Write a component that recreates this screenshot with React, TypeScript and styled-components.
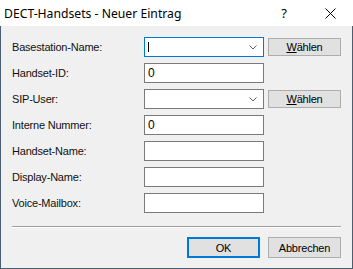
import React from "react";
import styled, { createGlobalStyle } from "styled-components";

const Global = createGlobalStyle`
  html, body { margin: 0; padding: 0; background: #ffffff; }
  body { width: 353px; height: 269px; overflow: hidden; }
  * { box-sizing: border-box; }
`;

const Window = styled.div`
  width: 353px;
  height: 269px;
  display: flex;
  flex-direction: column;
  background: #f0f0f0;
`;

const TitleBar = styled.div`
  height: 26px;
  flex: none;
  background: #ffffff;
  display: flex;
  align-items: center;
  padding-left: 4px;
  font-family: "Noto Sans", "Open Sans", sans-serif;
  font-size: 12.2px;
  color: #000000;
`;

const TitleText = styled.div`
  flex: 1;
  white-space: nowrap;
`;

const TitleButton = styled.div<{ $w: number }>`
  width: ${(p) => p.$w}px;
  height: 26px;
  display: flex;
  align-items: center;
  justify-content: center;
  font-size: 13px;
  color: #000;
`;

const Body = styled.div`
  flex: 1;
  border: 1px solid #4b5d70;
  border-top: none;
  padding: 11px 11px 10px 11px;
  display: flex;
  flex-direction: column;
  font-family: "Liberation Sans", Arial, sans-serif;
  font-size: 11px;
  color: #000;
`;

const Form = styled.div`
  display: grid;
  grid-template-columns: 128px 120px 73px;
  column-gap: 4px;
  row-gap: 6px;
  grid-auto-rows: 20px;
`;

const Label = styled.div`
  grid-column: 1;
  display: flex;
  align-items: center;
  white-space: nowrap;
  letter-spacing: -0.2px;
  color: #111;
`;

const Field = styled.div<{ $focus?: boolean }>`
  grid-column: 2;
  height: 20px;
  background: #ffffff;
  border: 1px solid ${(p) => (p.$focus ? "#0078d7" : "#7a7a7a")};
  display: flex;
  align-items: center;
  padding-left: 3px;
  font-size: 12px;
`;

const Caret = styled.span`
  width: 1px;
  height: 10px;
  background: #000;
`;

const Grow = styled.span`
  flex: 1;
`;

const Chevron = styled.svg`
  width: 8px;
  height: 5px;
  margin-right: 6px;
`;

const Button = styled.button<{ $default?: boolean; $h: number }>`
  font-family: "Liberation Sans", Arial, sans-serif;
  font-size: 11px;
  letter-spacing: -0.2px;
  color: #000;
  width: 73px;
  height: ${(p) => p.$h}px;
  background: #e1e1e1;
  border: ${(p) => (p.$default ? "2px solid #0078d7" : "1px solid #adadad")};
  padding: 0;
  margin: 0;
  display: flex;
  align-items: center;
  justify-content: center;
  align-self: center;
`;

const Separator = styled.div`
  margin-top: 13px;
  height: 2px;
  border-top: 1px solid #a0a0a0;
  border-bottom: 1px solid #ffffff;
`;

const Footer = styled.div`
  margin-top: 9px;
  display: flex;
  justify-content: flex-end;
  gap: 8px;
`;

const Key = styled.span`
  text-decoration: underline;
`;

const ChevronIcon = () => (
  <Chevron viewBox="0 0 8 5">
    <polyline points="0.5,0.5 4,4 7.5,0.5" fill="none" stroke="#606060" strokeWidth="1" />
  </Chevron>
);

const CloseIcon = () => (
  <svg width="11" height="11" viewBox="0 0 11 11">
    <path d="M0.5 0.5 L10.5 10.5 M10.5 0.5 L0.5 10.5" stroke="#000" strokeWidth="1" />
  </svg>
);

export default function App() {
  return (
    <>
      <Global />
      <Window>
        <TitleBar>
          <TitleText>DECT-Handsets - Neuer Eintrag</TitleText>
          <TitleButton $w={46}>?</TitleButton>
          <TitleButton $w={46}>
            <CloseIcon />
          </TitleButton>
        </TitleBar>
        <Body>
          <Form>
            <Label>Basestation-Name:</Label>
            <Field $focus>
              <Caret />
              <Grow />
              <ChevronIcon />
            </Field>
            <Button $h={18}>
              <span>
                <Key>W</Key>ählen
              </span>
            </Button>

            <Label>Handset-ID:</Label>
            <Field>0</Field>
            <span />

            <Label>SIP-User:</Label>
            <Field>
              <Grow />
              <ChevronIcon />
            </Field>
            <Button $h={18}>
              <span>
                <Key>W</Key>ählen
              </span>
            </Button>

            <Label>Interne Nummer:</Label>
            <Field>0</Field>
            <span />

            <Label>Handset-Name:</Label>
            <Field />
            <span />

            <Label>Display-Name:</Label>
            <Field />
            <span />

            <Label>Voice-Mailbox:</Label>
            <Field />
            <span />
          </Form>
          <Separator />
          <Footer>
            <Button $default $h={21}>OK</Button>
            <Button $h={21}>Abbrechen</Button>
          </Footer>
        </Body>
      </Window>
    </>
  );
}
